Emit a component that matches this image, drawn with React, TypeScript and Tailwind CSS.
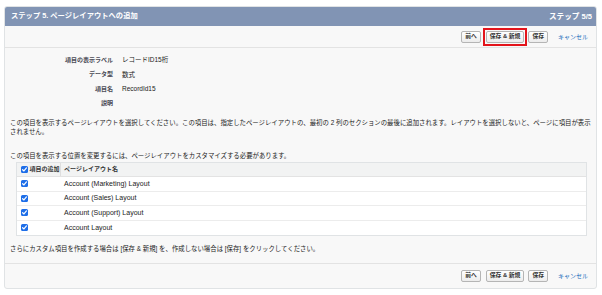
import React from "react";

const Check = () => (
  <span className="inline-flex w-[7px] h-[7px] rounded-[1.5px] bg-[#1e6ee8] items-center justify-center shrink-0">
    <svg viewBox="0 0 10 10" className="w-[7px] h-[7px]">
      <path d="M2.3 5.3 L4.2 7.1 L7.8 2.8" stroke="white" strokeWidth="1.7" fill="none" strokeLinecap="round" strokeLinejoin="round" />
    </svg>
  </span>
);

const Btn = ({ children }: { children: React.ReactNode }) => (
  <button className="inline-flex items-center justify-center h-[12px] px-[3px] border border-[#b5b5b5] rounded-[2px] bg-linear-to-b from-white to-[#ececec] text-[5.8px] font-bold text-[#333] leading-none whitespace-nowrap">
    {children}
  </button>
);

const Buttons = ({ marked }: { marked?: boolean }) => (
  <div className="flex items-center justify-end pr-[8px]">
    <Btn>前へ</Btn>
    <span className="relative inline-flex ml-[5px]">
      <Btn>保存 &amp; 新規</Btn>
      {marked && (
        <span className="absolute left-[-3px] right-[-3px] top-[-3px] bottom-[-3px] border-2 border-[#e3141b]" />
      )}
    </span>
    <span className="inline-flex ml-[4px]">
      <Btn>保存</Btn>
    </span>
    <span className="ml-[10px] text-[6px] leading-none text-[#1468b8]">キャンセル</span>
  </div>
);

const rows = [
  "Account (Marketing) Layout",
  "Account (Sales) Layout",
  "Account (Support) Layout",
  "Account Layout",
];

export default function App() {
  return (
    <div className="w-[602px] h-[295px] bg-white pt-[6px] pl-[4px] pr-[5px] font-['Liberation_Sans','Noto_Sans_CJK_JP',sans-serif] text-[#222]">
      <div className="h-[283px] bg-[#f8f8f8] border border-[#e0e3e5] rounded-[3px] overflow-hidden flex flex-col">
        <div className="h-[19px] shrink-0 bg-[#8194b4] flex items-center justify-between pl-[6px] pr-[4px] text-white font-bold text-[7.3px]">
          <span>ステップ 5. ページレイアウトへの追加</span>
          <span className="text-[7.6px]">ステップ 5/5</span>
        </div>
        <div className="h-[22px] shrink-0 border-b border-[#e3e3e3] flex items-center justify-end">
          <Buttons marked />
        </div>
        <div className="flex-1 px-[5px] pt-[5px]">
          <div className="grid grid-cols-[103px_1fr] gap-x-[9px] auto-rows-[14.5px] items-center">
            <div className="text-right text-[6px] font-bold text-[#4a4a56]">項目の表示ラベル</div>
            <div className="text-[6.5px]">レコードID15桁</div>
            <div className="text-right text-[6px] font-bold text-[#4a4a56]">データ型</div>
            <div className="text-[6.5px]">数式</div>
            <div className="text-right text-[6px] font-bold text-[#4a4a56]">項目名</div>
            <div className="text-[6.5px]">RecordId15</div>
            <div className="text-right text-[6px] font-bold text-[#4a4a56]">説明</div>
            <div className="text-[6.5px]"></div>
          </div>
          <p className="mt-[6.5px] text-[6.4px] leading-[9px]">
            この項目を表示するページレイアウトを選択してください。この項目は、指定したページレイアウトの、最初の 2 列のセクションの最後に追加されます。レイアウトを選択しないと、ページに項目が表示
            <br />
            されません。
          </p>
          <p className="mt-[15px] text-[6.4px] leading-[9px]">
            この項目を表示する位置を変更するには、ページレイアウトをカスタマイズする必要があります。
          </p>
          <div className="mt-[2.5px] ml-[6px] mr-[4px] border border-[#e0e3e5] bg-white">
            <div className="h-[14px] bg-[#f2f3f3] flex items-stretch border-b border-[#e3e3e3] text-[6px] font-bold text-[#333]">
              <div className="w-[44px] flex items-center pl-[4px] gap-[1.5px] border-r border-[#dedede]">
                <Check />
                <span>項目の追加</span>
              </div>
              <div className="flex items-center pl-[3px]">ページレイアウト名</div>
            </div>
            {rows.map((r, i) => (
              <div
                key={r}
                className={`h-[14.5px] flex items-center text-[7px] text-[#222] ${i < rows.length - 1 ? "border-b border-[#ececec]" : ""}`}
              >
                <div className="w-[44px] pl-[4px] flex items-center">
                  <Check />
                </div>
                <div className="pl-[3px]">{r}</div>
              </div>
            ))}
          </div>
          <p className="mt-[8px] text-[6.4px] leading-[9px]">
            さらにカスタム項目を作成する場合は [保存 &amp; 新規] を、作成しない場合は [保存] をクリックしてください。
          </p>
        </div>
        <div className="h-[25px] shrink-0 border-t border-[#e3e3e3] flex items-center justify-end">
          <Buttons />
        </div>
      </div>
    </div>
  );
}
